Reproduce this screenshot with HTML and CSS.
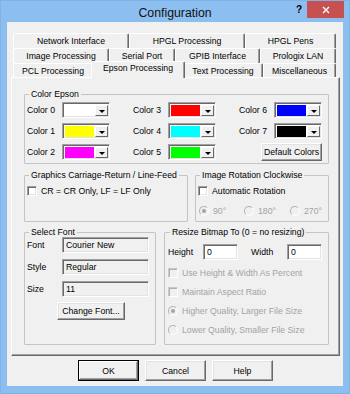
FILE: index.html
```html
<!DOCTYPE html>
<html lang="en">
<head>
    <meta charset="UTF-8">
    <title>Configuration</title>
    <link rel="stylesheet" href="styles.css">
</head>
<body>
<div class="window">
    <div class="titlebar">
        <span class="title">Configuration</span>
        <span class="help-btn">?</span>
        <span class="close-btn">
            <svg width="8" height="8" viewBox="0 0 8 8"><path d="M1 1L7 7M7 1L1 7" stroke="#fff" stroke-width="1.4"/></svg>
        </span>
    </div>
    <div class="client">
        <div class="tabs">
            <div class="tab-row">
                <div class="tab" style="width:116px">Network Interface</div>
                <div class="tab" style="width:116px">HPGL Processing</div>
                <div class="tab" style="width:91px">HPGL Pens</div>
            </div>
            <div class="tab-row">
                <div class="tab" style="width:96px">Image Processing</div>
                <div class="tab" style="width:66px">Serial Port</div>
                <div class="tab" style="width:85px">GPIB Interface</div>
                <div class="tab" style="width:76px">Prologix LAN</div>
            </div>
            <div class="tab-row last">
                <div class="tab" style="width:80px">PCL Processing</div>
                <div class="tab selected" style="width:94px">Epson Processing</div>
                <div class="tab" style="width:80px">Text Processing</div>
                <div class="tab" style="width:73px">Miscellaneous</div>
            </div>
        </div>

        <div class="panel">
            <fieldset class="group color-group">
                <legend>Color Epson</legend>
                <div class="colors">
                    <div class="color-item"><label>Color 0</label><span class="combo"><span class="swatch" style="background:#fff"></span><span class="drop"></span></span></div>
                    <div class="color-item"><label>Color 3</label><span class="combo"><span class="swatch" style="background:#f00"></span><span class="drop"></span></span></div>
                    <div class="color-item"><label>Color 6</label><span class="combo"><span class="swatch" style="background:#00f"></span><span class="drop"></span></span></div>
                    <div class="color-item"><label>Color 1</label><span class="combo"><span class="swatch" style="background:#ff0"></span><span class="drop"></span></span></div>
                    <div class="color-item"><label>Color 4</label><span class="combo"><span class="swatch" style="background:#0ff"></span><span class="drop"></span></span></div>
                    <div class="color-item"><label>Color 7</label><span class="combo"><span class="swatch" style="background:#000"></span><span class="drop"></span></span></div>
                    <div class="color-item"><label>Color 2</label><span class="combo"><span class="swatch" style="background:#f0f"></span><span class="drop"></span></span></div>
                    <div class="color-item"><label>Color 5</label><span class="combo"><span class="swatch" style="background:#0f0"></span><span class="drop"></span></span></div>
                    <div class="color-item end"><button class="btn default-colors">Default Colors</button></div>
                </div>
            </fieldset>

            <div class="group-row middle">
                <fieldset class="group crlf-group">
                    <legend>Graphics Carriage-Return / Line-Feed</legend>
                    <div class="option"><span class="check"></span>CR = CR Only, LF = LF Only</div>
                </fieldset>
                <fieldset class="group rotation-group">
                    <legend>Image Rotation Clockwise</legend>
                    <div class="option"><span class="check"></span>Automatic Rotation</div>
                    <div class="radios">
                        <div class="option disabled"><span class="radio checked"></span>90°</div>
                        <div class="option disabled"><span class="radio"></span>180°</div>
                        <div class="option disabled"><span class="radio"></span>270°</div>
                    </div>
                </fieldset>
            </div>

            <div class="group-row bottom">
                <fieldset class="group font-group">
                    <legend>Select Font</legend>
                    <div class="font-row"><span class="font-label">Font</span><span class="field readonly">Courier New</span></div>
                    <div class="font-row"><span class="font-label">Style</span><span class="field readonly">Regular</span></div>
                    <div class="font-row"><span class="font-label">Size</span><span class="field readonly">11</span></div>
                    <button class="btn change-font">Change Font...</button>
                </fieldset>
                <fieldset class="group resize-group">
                    <legend>Resize Bitmap To (0 = no resizing)</legend>
                    <div class="size-row">
                        <span class="size-label">Height</span><span class="field small">0</span>
                        <span class="size-label width-label">Width</span><span class="field small">0</span>
                    </div>
                    <div class="options">
                        <div class="option disabled"><span class="check"></span>Use Height &amp; Width As Percent</div>
                        <div class="option disabled"><span class="check"></span>Maintain Aspect Ratio</div>
                        <div class="option disabled"><span class="radio checked"></span>Higher Quality, Larger File Size</div>
                        <div class="option disabled"><span class="radio"></span>Lower Quality, Smaller File Size</div>
                    </div>
                </fieldset>
            </div>
        </div>

        <div class="buttons">
            <button class="btn dialog-btn default">OK</button>
            <button class="btn dialog-btn">Cancel</button>
            <button class="btn dialog-btn">Help</button>
        </div>
    </div>
</div>
</body>
</html>
```

FILE: styles.css
```css
:root {
    --face: #f0f0f0;
    --shadow: #a0a0a0;
    --dark-shadow: #696969;
    --light: #e3e3e3;
    --disabled: #a3a3a3;
}
* {
    box-sizing: border-box;
}
body {
    margin: 0;
    font-family: "Liberation Sans", Arial, sans-serif;
    font-size: 8.7px;
    color: #000;
}

/* window frame */
.window {
    width: 350px;
    height: 394px;
    background: #8cbff0;
    border: 1px solid #7db3e8;
    display: flex;
    flex-direction: column;
}
.titlebar {
    height: 21px;
    display: flex;
    align-items: flex-start;
    padding: 0 5px 0 6px;
}
.title {
    flex: 1;
    text-align: center;
    padding-left: 52px;
    padding-top: 4px;
    font-size: 12.3px;
    line-height: 16px;
    color: #111;
}
.help-btn {
    width: 16px;
    text-align: center;
    font-weight: bold;
    font-size: 10px;
    line-height: 17px;
}
.close-btn {
    width: 37px;
    height: 17px;
    background: #c75050;
    display: flex;
    align-items: center;
    justify-content: center;
}
.client {
    flex: 1;
    margin: 0 6px 7px 6px;
    background: var(--face);
    padding: 11px 3px 0 4px;
}

/* tabs */
.tabs {
    margin-left: 2px;
    width: 323px;
}
.tab-row {
    display: flex;
    height: 15px;
}
.tab-row.last {
    height: 14px;
}
.tab {
    height: 100%;
    background: var(--face);
    border-top: 1px solid #fff;
    border-left: 1px solid #fff;
    border-right: 1px solid var(--dark-shadow);
    box-shadow: inset -1px 0 var(--shadow);
    border-radius: 2px 2px 0 0;
    text-align: center;
    line-height: 14px;
    white-space: nowrap;
}
.tab.selected {
    position: relative;
    z-index: 1;
    height: 17px;
    margin: -2px -2px -1px -2px;
    line-height: 13px;
}

/* page */
.panel {
    width: 329px;
    padding: 11px 10px 10px 12px;
    border-top: 1px solid #fff;
    border-left: 1px solid #fff;
    border-right: 1px solid var(--dark-shadow);
    border-bottom: 1px solid var(--dark-shadow);
    box-shadow: inset -1px -1px var(--shadow);
    display: flex;
    flex-direction: column;
}
.group {
    margin: 0;
    min-width: 0;
    padding: 0 2px 2px;
    border: 1px solid #c4c4c4;
    border-radius: 1px;
}
.group legend {
    padding: 0 2px;
    margin-left: 2px;
    line-height: 10px;
}
.group-row {
    display: flex;
    justify-content: space-between;
}
.color-group {
    height: 75px;
}
.colors {
    display: grid;
    grid-template-columns: repeat(3, 83px);
    column-gap: 23px;
    row-gap: 5px;
    padding-top: 3px;
}
.color-item {
    display: flex;
    align-items: center;
    height: 16px;
}
.color-item label {
    width: 35px;
}
.color-item.end {
    justify-content: flex-end;
}
.combo {
    width: 48px;
    height: 16px;
    display: flex;
    padding: 2px 1px 1px 2px;
    background: #fff;
    border: 1px solid;
    border-color: var(--shadow) #fff #fff var(--shadow);
    box-shadow: inset 1px 1px var(--dark-shadow), inset -1px -1px var(--light);
}
.swatch {
    flex: 1;
    margin-right: 1px;
}
.drop {
    width: 13px;
    background: var(--face);
    border-top: 1px solid #fff;
    border-left: 1px solid #fff;
    border-right: 1px solid var(--dark-shadow);
    border-bottom: 1px solid var(--dark-shadow);
    display: flex;
    align-items: center;
    justify-content: center;
}
.drop::after {
    content: "";
    border-left: 3px solid transparent;
    border-right: 3px solid transparent;
    border-top: 3px solid #000;
    margin-top: 1px;
}

/* buttons */
.btn {
    font: inherit;
    color: #000;
    background: var(--face);
    border: 1px solid;
    border-color: #fff var(--dark-shadow) var(--dark-shadow) #fff;
    box-shadow: inset -1px -1px var(--shadow), inset 1px 1px var(--light);
    padding: 0;
    margin: 0;
}
.default-colors {
    width: 61px;
    height: 18px;
}

/* checkboxes and radios */
.option {
    display: flex;
    align-items: center;
    height: 12px;
    white-space: nowrap;
}
.option.disabled {
    color: var(--disabled);
}
.check {
    width: 10px;
    height: 10px;
    margin-right: 4px;
    background: #fff;
    border: 1px solid;
    border-color: var(--shadow) #fff #fff var(--shadow);
    box-shadow: inset 1px 1px var(--dark-shadow), inset -1px -1px var(--light);
}
.disabled .check {
    background: var(--face);
    border-color: #c8c8c8 #fff #fff #c8c8c8;
    box-shadow: inset 1px 1px #b0b0b0;
}
.radio {
    width: 10px;
    height: 10px;
    margin-right: 4px;
    border-radius: 50%;
    background: var(--face);
    border: 1px solid;
    border-color: #b4b4b4 #fff #fff #b4b4b4;
    display: flex;
    align-items: center;
    justify-content: center;
}
.radio.checked::after {
    content: "";
    width: 4px;
    height: 4px;
    border-radius: 50%;
    background: var(--disabled);
}

.middle {
    margin-top: 6px;
}
.crlf-group {
    width: 164px;
    height: 52px;
    padding-top: 5px;
}
.rotation-group {
    width: 134px;
    height: 52px;
    padding-top: 5px;
}
.radios {
    display: grid;
    grid-template-columns: 45px 46px 45px;
    margin-top: 8px;
    margin-left: 1px;
}

.bottom {
    margin-top: 5px;
}
.font-group {
    width: 132px;
    height: 118px;
}
.font-row {
    display: flex;
    align-items: center;
    height: 16px;
    margin-bottom: 6px;
}
.font-label {
    width: 35px;
}
.field {
    height: 16px;
    padding: 0 3px;
    line-height: 14px;
    background: #fff;
    border: 1px solid;
    border-color: var(--shadow) #fff #fff var(--shadow);
    box-shadow: inset 1px 1px var(--dark-shadow), inset -1px -1px var(--light);
}
.field.readonly {
    width: 87px;
    background: var(--face);
}
.field.small {
    width: 35px;
}
.change-font {
    width: 68px;
    height: 18px;
    margin: -1px 0 0 30px;
}
.resize-group {
    width: 165px;
    height: 118px;
    padding: 7px 3px 0;
}
.size-row {
    display: flex;
    align-items: center;
    height: 16px;
}
.size-label {
    width: 35px;
}
.width-label {
    width: 36px;
    margin-left: 13px;
}
.options {
    display: flex;
    flex-direction: column;
    gap: 7px;
    margin-top: 7px;
}

.buttons {
    display: flex;
    justify-content: center;
    gap: 6px;
    margin-top: 4px;
}
.dialog-btn {
    width: 61px;
    height: 21px;
}
.dialog-btn.default {
    border: 1px solid #000;
    box-shadow: inset -1px -1px var(--dark-shadow), inset 1px 1px #fff, inset -2px -2px var(--shadow);
}
```
